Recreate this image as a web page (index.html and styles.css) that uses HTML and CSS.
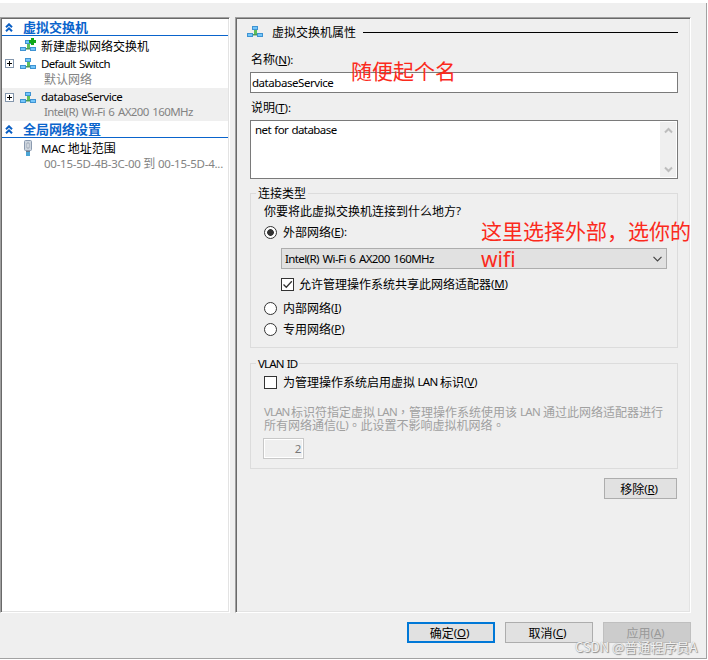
FILE: index.html
```html
<!DOCTYPE html>
<html lang="zh-CN">
<head>
<meta charset="utf-8">
<title>虚拟交换机管理器</title>
<link rel="stylesheet" href="styles.css">
</head>
<body>
<svg class="defs" width="0" height="0">
  <defs>
    <symbol id="switch" viewBox="0 0 16 12">
      <path d="M7 4h3v4H7z" fill="#5fbf5a"/><path d="M5 8h6v1H5z" fill="#4a9a58"/><path d="M6 9h4v1H6z" fill="#9fc7a6"/>
      <rect x="5" y="0" width="6" height="4" fill="#3f93d2"/><rect x="6" y="1" width="4" height="2" fill="#74c6fa"/>
      <rect x="0" y="7" width="6" height="4" fill="#3f93d2"/><rect x="1" y="8" width="4" height="2" fill="#74c6fa"/>
      <rect x="10" y="7" width="6" height="4" fill="#3f93d2"/><rect x="11" y="8" width="4" height="2" fill="#74c6fa"/>
    </symbol>
    <symbol id="chev" viewBox="0 0 8 9"><path d="M1 4.300 4 1.300l3 3M1 8.300 4 5.300l3 3" fill="none" stroke="#0a5fc4" stroke-width="2"/></symbol>
  </defs>
</svg>
<div class="dialog">
  <div class="panes">
    <nav class="pane tree">
      <div class="head"><svg class="chev"><use href="#chev"/></svg>虚拟交换机</div>
      <div class="item">
        <span class="tw"></span>
        <svg class="ico up" viewBox="0 0 16 14"><use href="#switch" y="2" width="16" height="12"/><path d="M11 0h3v2h2v3h-2v2h-3V5H9V2h2z" fill="#12a81a"/></svg>
        <div class="names"><div class="name">新建虚拟网络交换机</div></div>
      </div>
      <div class="item two">
        <span class="tw"><span class="plus"></span></span>
        <svg class="ico"><use href="#switch" width="16" height="12"/></svg>
        <div class="names"><div class="name latin"><span class="t n1">Default Switch</span></div><div class="sub">默认网络</div></div>
      </div>
      <div class="item two sel">
        <span class="tw"><span class="plus"></span></span>
        <svg class="ico"><use href="#switch" width="16" height="12"/></svg>
        <div class="names"><div class="name latin"><span class="t n2">databaseService</span></div><div class="sub"><span class="t n3">Intel(R) Wi-Fi 6 AX200 160MHz</span></div></div>
      </div>
      <div class="head"><svg class="chev"><use href="#chev"/></svg>全局网络设置</div>
      <div class="item two">
        <span class="tw"></span>
        <svg class="ico mac" viewBox="0 0 16 16"><rect x="4.500" y=".5" width="7" height="10" rx="1" fill="#cdd5de" stroke="#8c9bb0"/><path d="M7 3h2v5H7z" fill="#f4f7fa" stroke="#8794a3" stroke-width=".7"/><path d="M6 11h4v1H6z" fill="#68798b"/><path d="M6 12h4v4H6z" fill="#4aa5d5"/></svg>
        <div class="names"><div class="name"><span class="t n4">MAC</span> 地址范围</div><div class="sub"><span class="t">00-15-5D-4B-3C-00</span> 到 <span class="t">00-15-5D-4...</span></div></div>
      </div>
    </nav>
    <main class="pane props">
      <div class="title"><svg class="ico"><use href="#switch" width="16" height="12"/></svg><span class="titletext">虚拟交换机属性</span><span class="rule"></span></div>
      <div class="label">名称<span class="t k">(<u>N</u>):</span></div>
      <div class="input"><span class="t n2">databaseService</span></div>
      <div class="label">说明<span class="t k">(<u>T</u>):</span></div>
      <div class="area"><span class="t n8">net for database</span>
        <div class="scroll">
          <svg width="9" height="7" viewBox="0 0 9 7"><path d="M1 5.500 4.500 2 8 5.500" fill="none" stroke="#bdbdbd" stroke-width="2"/></svg>
          <svg width="9" height="7" viewBox="0 0 9 7"><path d="M1 1.500 4.500 5 8 1.500" fill="none" stroke="#bdbdbd" stroke-width="2"/></svg>
        </div>
      </div>
      <section class="group conn">
        <div class="legend">连接类型</div>
        <div class="line q">你要将此虚拟交换机连接到什么地方<span class="t">?</span></div>
        <div class="line ext"><span class="radio on"></span>外部网络<span class="t k">(<u>E</u>):</span></div>
        <div class="combo"><span class="t n3">Intel(R) Wi-Fi 6 AX200 160MHz</span><svg width="9" height="6" viewBox="0 0 9 6"><path d="M.5.800 4.500 4.800 8.500.800" fill="none" stroke="#444" stroke-width="1.200"/></svg></div>
        <div class="line share"><span class="check"><svg width="11" height="11" viewBox="0 0 11 11"><path d="M1.500 5.500 4.300 8.300 9.800 2.300" fill="none" stroke="#333" stroke-width="1.300"/></svg></span>允许管理操作系统共享此网络适配器<span class="t k">(<u>M</u>)</span></div>
        <div class="line int"><span class="radio"></span>内部网络<span class="t k">(<u>I</u>)</span></div>
        <div class="line priv"><span class="radio"></span>专用网络<span class="t k">(<u>P</u>)</span></div>
      </section>
      <section class="group vlan">
        <div class="legend"><span class="t n10">VLAN ID</span></div>
        <div class="line enable"><span class="check"></span>为管理操作系统启用虚拟<span class="t lan">LAN</span>标识<span class="t k">(<u>V</u>)</span></div>
        <div class="hint"><div><span class="t vl">VLAN</span>标识符指定虚拟<span class="t lan tight">LAN</span><span class="punct" lang="zh-TW">，</span>管理操作系统使用该<span class="t lan">LAN</span>通过此网络适配器进行</div><div>所有网络通信<span class="t k">(<u>L</u>)</span><span class="punct" lang="zh-TW">。</span>此设置不影响虚拟机网络<span class="punct" lang="zh-TW">。</span></div></div>
        <div class="spin"><span class="t">2</span></div>
      </section>
      <div class="btn remove">移除<span class="t k">(<u>R</u>)</span></div>
    </main>
  </div>
  <footer class="actions">
    <div class="btn ok">确定<span class="t k">(<u>O</u>)</span></div>
    <div class="btn">取消<span class="t k">(<u>C</u>)</span></div>
    <div class="btn off">应用<span class="t k">(<u>A</u>)</span></div>
  </footer>
</div>
<div class="note one">随便起个名</div>
<div class="note two-lines">这里选择外部，选你的<br><span class="wifi">wifi</span></div>
<div class="mark">CSDN @普通程序员A</div>
</body>
</html>
```

FILE: styles.css
```css
* { box-sizing: border-box; }
body {
  margin: 0;
  width: 708px;
  height: 660px;
  overflow: hidden;
  position: relative;
  background: #fff;
  color: #000;
  font: 12px/16px "Noto Sans CJK SC", sans-serif;
  white-space: nowrap;
}
svg { flex: none; display: block; }
.defs { position: absolute; }
.t { font-family: "Noto Sans", sans-serif; font-size: 11.5px; letter-spacing: -0.25px; }
.n1 { letter-spacing: -0.7px; word-spacing: 1px; }
.n2 { letter-spacing: -0.45px; }
.n3 { letter-spacing: -0.6px; word-spacing: 1.2px; }
.n8 { letter-spacing: -0.55px; word-spacing: 0.7px; }
.n10 { letter-spacing: -0.85px; word-spacing: 1px; }
.k { letter-spacing: -0.15px; }
u { text-underline-offset: 1px; text-decoration-thickness: 1px; }

.dialog {
  margin-top: 3px;
  width: 707px;
  height: 656px;
  background: #efefef;
  border-right: 1px solid #a2a2a2;
  border-bottom: 1px solid #a2a2a2;
}
.panes { display: flex; gap: 5px; padding-top: 14px; }
.pane {
  height: 596px;
  border: 1px solid;
  border-color: #a0a0a0 #fff #fff #a0a0a0;
  box-shadow: inset 1px 1px #696969, inset -1px -1px #e3e3e3;
  padding: 1px;
}
.tree { width: 230px; background: #fff; }
.props { width: 456px; padding: 1px 12px 0 14px; }

.head {
  height: 17px;
  display: flex;
  align-items: center;
  border-bottom: 1px solid #0a64cc;
  color: #0a64cc;
  font-weight: 700;
  font-size: 13px;
  line-height: 16px;
}
.chev { width: 8px; height: 9px; margin: 0 10px 0 3px; }
.item { display: flex; height: 18px; }
.item.two { height: 34px; }
.item.sel { height: 33px; background: #efefef; }
.tw { width: 18px; flex: none; padding: 5px 0 0 3px; }
.plus {
  display: block;
  width: 9px;
  height: 9px;
  border: 1px solid #8496ac;
  background: linear-gradient(#000, #000) center / 5px 1px no-repeat, linear-gradient(#000, #000) center / 1px 5px no-repeat, #fff;
}
.ico { width: 16px; height: 12px; margin-top: 4px; }
.ico.up { height: 14px; margin-top: 2px; }
.ico.mac { height: 16px; margin-top: 2px; }
.names { padding-left: 5px; }
.name { height: 18px; line-height: 20px; }
.name.latin { line-height: 18px; }
.sub { padding-left: 3px; color: #838383; line-height: 14px; }
.sel .name { line-height: 16px; height: 17px; }
.sel .sub { line-height: 12px; }

.title { display: flex; align-items: center; height: 26px; margin-left: -3px; }
.title .ico { margin: 0 9px 0 0; }
.rule { flex: 1; height: 1px; background: #000; margin-left: 7px; }
.label { height: 27px; line-height: 27px; padding-left: 1px; }
.input { height: 21px; border: 1px solid #7a7a7a; background: #fff; padding-left: 1px; line-height: 17px; }
.area {
  display: flex;
  justify-content: space-between;
  height: 59px;
  border: 1px solid #7a7a7a;
  background: #fff;
  padding: 1px 1px 1px 4px;
}
.scroll { width: 16px; background: #efefef; display: flex; flex-direction: column; justify-content: space-between; align-items: center; padding: 5px 0 4px; }

.group { border: 1px solid #dcdcdc; padding-left: 13px; }
.conn { margin-top: 14px; height: 155px; }
.vlan { margin-top: 15px; height: 106px; }
.legend { width: max-content; height: 16px; margin: -9px 0 0 -8px; padding: 0 2px; background: #efefef; line-height: 16px; }
.line { display: flex; align-items: center; height: 16px; }
.q { margin-top: 2px; }
.ext { margin-top: 5px; }
.radio { width: 13px; height: 13px; flex: none; border: 1px solid #333; border-radius: 50%; background: #fff; margin-right: 6px; }
.radio.on { background: radial-gradient(circle, #333 3px, #fff 3.7px); }
.combo {
  width: 386px;
  height: 21px;
  margin: 8px 0 0 17px;
  padding: 0 4px 0 3px;
  border: 1px solid #adadad;
  background: #e1e1e1;
  display: flex;
  align-items: center;
  justify-content: space-between;
}
.check { width: 13px; height: 13px; flex: none; border: 1px solid #333; background: #fff; margin-right: 5px; }
.enable .check { margin-right: 6px; }
.share { margin: 7px 0 0 17px; }
.int { margin-top: 8px; }
.priv { margin-top: 5px; }
.enable { margin-top: 3px; }
.lan { width: 26px; text-align: center; letter-spacing: -0.7px; }
.enable .lan { width: 25px; }
.lan.tight { width: 22px; text-align: right; }
.vl { width: 27px; letter-spacing: -0.9px; }
.hint { margin-top: 15px; line-height: 13px; color: #a0a0a0; }
.hint > div { display: flex; height: 13px; }
.punct { font-family: "Noto Sans CJK TC", sans-serif; }
.spin { width: 41px; height: 21px; margin: 7px 0 0 -1px; border: 1px solid #c8c8c8; box-shadow: inset 0 0 0 1px #fff; text-align: right; padding-right: 2px; line-height: 17px; color: #777; }

.btn { width: 88px; height: 21px; border: 1px solid #adadad; background: #e1e1e1; display: flex; align-items: center; justify-content: center; padding-right: 3px; }
.remove { width: 73px; margin: 9px 0 0 354px; }
.actions { display: flex; justify-content: flex-end; gap: 10px; margin: 9px 15px 0 0; }
.ok { border: 2px solid #0078d7; }
.off { background: #ccc; border-color: #bfbfbf; color: #999; }

.note { position: absolute; color: #fb2a1c; font-size: 21px; line-height: 28px; }
.one { left: 351px; top: 56px; }
.two-lines { left: 481px; top: 216px; }
.wifi { font-family: "Noto Sans", sans-serif; }
.mark { position: absolute; left: 575px; top: 638px; font-size: 13px; line-height: 18px; color: #f2f2f2; text-shadow: 1px 1px 1px #8a8a8a, 0 0 1px #999; }
```
